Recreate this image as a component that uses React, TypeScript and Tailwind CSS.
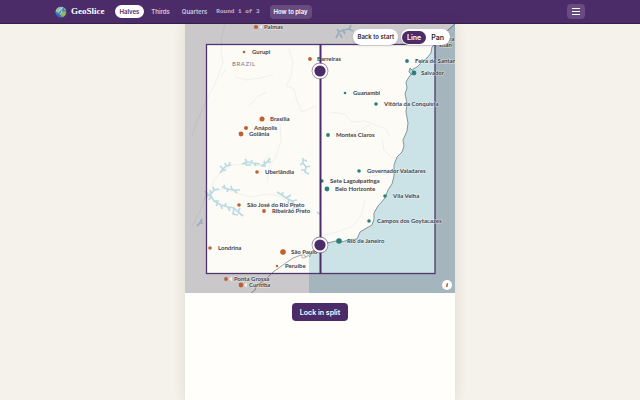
import React, { useState } from 'react';
import clsx from 'clsx';

type City = { name: string; x: number; y: number; r: number; labelX: number; side: 'west' | 'east' };

const cities: City[] = [
  { name: 'Palmas', x: 71, y: 3, r: 2.1, labelX: 79, side: 'west' },
  { name: 'Gurupi', x: 59, y: 28, r: 1.3, labelX: 67, side: 'west' },
  { name: 'Barreiras', x: 125, y: 35, r: 1.9, labelX: 132, side: 'west' },
  { name: 'Brasília', x: 77, y: 95, r: 2.5, labelX: 85, side: 'west' },
  { name: 'Anápolis', x: 61, y: 104, r: 2, labelX: 69, side: 'west' },
  { name: 'Goiânia', x: 56, y: 110, r: 2.4, labelX: 64, side: 'west' },
  { name: 'Uberlândia', x: 72, y: 148, r: 1.8, labelX: 80, side: 'west' },
  { name: 'São José do Rio Preto', x: 54, y: 181, r: 1.8, labelX: 62, side: 'west' },
  { name: 'Ribeirão Preto', x: 79, y: 187, r: 1.9, labelX: 87, side: 'west' },
  { name: 'Londrina', x: 25, y: 224, r: 1.8, labelX: 33, side: 'west' },
  { name: 'São Paulo', x: 98, y: 228, r: 2.8, labelX: 106, side: 'west' },
  { name: 'Peruíbe', x: 92, y: 242, r: 1.2, labelX: 100, side: 'west' },
  { name: 'Ponta Grossa', x: 41, y: 255, r: 1.9, labelX: 49, side: 'west' },
  { name: 'Curitiba', x: 56, y: 261, r: 2.4, labelX: 64, side: 'west' },
  { name: 'Feira de Santana', x: 222, y: 37, r: 1.9, labelX: 230, side: 'east' },
  { name: 'Salvador', x: 229, y: 49, r: 2.4, labelX: 236, side: 'east' },
  { name: 'Guanambi', x: 160, y: 69, r: 1.3, labelX: 168, side: 'east' },
  { name: 'Vitória da Conquista', x: 191, y: 80, r: 1.8, labelX: 199, side: 'east' },
  { name: 'Montes Claros', x: 143, y: 111, r: 1.9, labelX: 151, side: 'east' },
  { name: 'Governador Valadares', x: 174, y: 147, r: 1.8, labelX: 182, side: 'east' },
  { name: 'Sete Lagoas', x: 137, y: 157, r: 1.7, labelX: 145, side: 'east' },
  { name: 'Belo Horizonte', x: 142, y: 165, r: 2.4, labelX: 150, side: 'east' },
  { name: 'Vila Velha', x: 200, y: 172, r: 1.8, labelX: 208, side: 'east' },
  { name: 'Campos dos Goytacazes', x: 184, y: 197, r: 1.8, labelX: 192, side: 'east' },
  { name: 'Rio de Janeiro', x: 154, y: 217, r: 2.8, labelX: 162, side: 'east' },
];

// Labels whose own dot is hidden or off the map
const looseLabels = [
  { name: 'Ipatinga', x: 173, y: 159 },
  { name: 'ra', x: 264, y: 17 },
  { name: 'stián', x: 254, y: 23 },
];

const modes = ['Halves', 'Thirds', 'Quarters'];

const coast =
  'M270 0 L263 6 L258 14 L252 18 L247 23 L246 29 L242 34 L237 38 L232 43 L228 45 L227 49 L224 53 L221 58 L222 64 L220 70 L222 79 L221 88 L223 99 L222 107 L218 116 L219 122 L217 128 L212 133 L209 141 L209 152 L207 160 L203 166 L200 174 L193 182 L189 189 L189 195 L187 201 L180 205 L175 208 L172 215 L164 216 L156 218 L151 217 L142 219 L136 219 L128 228 L124 233';

const southCoast = 'M136 219 L128 228 L121 233 L116 231 L108 234 L98 241 L88 248 L80 256 L72 261 L70 266 L65 270';

const lakes = [
  'M21 169 L26 172 L29 177 L36 181 L43 183 L49 184 L53 188 L58 192 M26 172 L24 176 M29 177 L34 177 M36 181 L37 185 M43 183 L45 187 M49 184 L48 190 L53 191 M53 188 L55 184 M33 179 L31 182 M40 182 L41 179',
  'M21 173 L26 170 L29 166 L34 165 M26 170 L25 166 M29 166 L28 163 M24 172 L20 167',
  'M35 149 L38 145 L41 142 L46 141 M38 145 L35 142 M41 142 L40 139 M36 147 L41 146 M44 141 L45 138',
  'M57 140 L62 138 L68 139 L75 140 M62 138 L60 135 M66 139 L67 136 M69 139 L71 142 M59 139 L62 141 L66 141',
  'M76 142 L80 140 L83 137 L85 134 M80 140 L79 137 M77 142 L81 142 M82 138 L86 138',
  'M37 163 L43 165 L49 166 L55 166 M43 165 L42 168 M47 165 L46 162 M49 166 L52 169 M40 164 L39 161',
  'M118 134 L118 139 L121 143 L120 148 L124 150 M118 139 L115 141 M121 143 L125 142 M120 146 L116 146 M119 136 L122 137',
  'M92 168 L97 171 L101 174 L107 177 L111 183 L116 186 M97 171 L98 168 M101 174 L106 171 M107 177 L112 176 M110 182 L107 186 M104 175 L103 180',
  'M12 202 L15 199 L17 195 M15 199 L18 199',
  'M132 188 L136 191',
  'M151 14 L154 8 L158 6 L164 5 L166 1 M154 8 L152 5 M158 6 L160 10 M164 5 L168 7 M155 10 L157 14',
];

const rivers =
  'M40 0 L37 12 L36 28 L38 38 L34 50 L28 64 L22 75 M22 75 L12 98 L7 112 M40 46 L36 52 M50 53 L61 56 L75 54 L88 51 M64 82 L72 73 L82 68 M104 25 L108 38 L106 52 L101 62 L109 65 L112 77 L117 88 L131 82 M82 158 L84 144 L91 132 L96 116 L95 100 M27 166 L28 157 L36 148 L46 141 L60 140 L76 142 L84 130 M22 169 L38 165 L52 169 L66 173 L82 170 L94 172 L107 181 M22 168 L15 187 L7 202 M145 88 L160 90 L167 98 L180 97 L201 105 L205 113 M197 115 L199 126 L207 134 M160 118 L172 107 L185 101 M171 162 L181 153 L193 151 M136 212 L152 208 L168 202 L177 190 L180 176';

const labelClass =
  "font-['Lato',sans-serif] text-[6px] font-bold fill-[#45424b] stroke-[#fdfbf6]/60 [paint-order:stroke] [stroke-width:1px]";

function Globe() {
  return (
    <svg viewBox="0 0 24 24" className="size-3 shrink-0" aria-hidden="true">
      <circle cx="12" cy="12" r="11" fill="#3f86c0" />
      <path d="M3 6 Q7 1 13 2 L15 6 L10 9 L8 14 L4 12 L1 12 Z" fill="#9fc0a0" />
      <path d="M13 13 L19 10 L22 13 L20 19 L15 22 L12 18 Z" fill="#9bb551" />
      <path d="M18 4 L22 8 L19 8 Z" fill="#b4c85b" />
      <path d="M2 15 Q4 21 11 23 L8 18 Z" fill="#24609c" />
      <path d="M16 2 L8 11 M14 9 L11 17" fill="none" stroke="#d8e8ee" strokeWidth="1.6" />
    </svg>
  );
}

function Handle({ y }: { y: number }) {
  return (
    <g>
      <circle cx="135" cy={y} r="8.4" fill="#5a4470" opacity="0.6" />
      <circle cx="135" cy={y} r="7.6" fill="#ffffff" />
      <circle cx="135" cy={y} r="5.6" fill="#4b2c69" />
    </g>
  );
}

function SplitMap() {
  return (
    <svg viewBox="0 0 270 269" className="block w-full" role="img" aria-label="Map of Brazil">
      <rect width="270" height="269" fill="#fdfbf6" />
      <path d={`${coast} L124 269 L270 269 Z`} fill="#cbe3e7" />
      <path d={rivers} fill="none" stroke="#e9e6e6" strokeWidth="0.6" />
      {lakes.map((d) => (
        <path key={d} d={d} fill="none" stroke="#b9dbe1" strokeWidth="1.7" strokeLinejoin="round" />
      ))}
      <path d={coast} fill="none" stroke="#85959b" strokeWidth="1" />
      <path d={southCoast} fill="none" stroke="#99979b" strokeWidth="0.9" />
      <path d="M227 46 L225 44 L224 48 L227 51" fill="#b9dce2" stroke="#4f8d94" strokeWidth="0.9" />
      <path d="M117 231 h3 v3 h-3 z" fill="#ffffff" stroke="#99979b" strokeWidth="0.6" />

      {/* Area outside the puzzle frame */}
      <path
        d="M0 0 H270 V269 H0 Z M21.5 20.5 V249.5 H250 V20.5 Z"
        fill="#2b2440"
        fillRule="evenodd"
        opacity="0.24"
      />
      <rect x="21.5" y="20.5" width="228.5" height="229" fill="none" stroke="#50366f" strokeWidth="1.3" />
      <path
        d="M74 3 l3 -2 v4 z M44 255 l3 -2.5 v5 z M59 261 l3 -2.5 v5 z"
        fill="#f3f0ec"
      />

      <text x="47" y="42" className="font-['Lato',sans-serif] text-[6px] tracking-widest fill-[#77767f]">
        BRAZIL
      </text>
      {looseLabels.map((label) => (
        <text key={label.name} x={label.x} y={label.y} className={labelClass}>
          {label.name}
        </text>
      ))}
      {cities.map((city) => (
        <g key={city.name}>
          <circle cx={city.x} cy={city.y} r={city.r} fill={city.side === 'west' ? '#c0602f' : '#2c7f7b'} />
          <text x={city.labelX} y={city.y + 2} className={labelClass}>
            {city.name}
          </text>
        </g>
      ))}

      <path d="M135.5 20 V250" stroke="#4b2c69" strokeWidth="2" />
      <Handle y={47} />
      <Handle y={221} />
    </svg>
  );
}

export default function App() {
  const [mode, setMode] = useState('Halves');
  const [tool, setTool] = useState('Line');

  return (
    <div className="flex min-h-screen flex-col bg-[#f5f2eb] font-['Inter',sans-serif]">
      <header className="border-b border-[#352049] bg-[#4b2c69]">
        <div className="mx-auto flex h-[23px] max-w-[530px] items-center">
          <a href="/" className="flex items-center gap-1 text-white">
            <Globe />
            <span className="font-['Liberation_Serif',serif] text-[9px] leading-none font-bold">GeoSlice</span>
          </a>
          <nav className="ml-[10px] flex items-center gap-[2px]">
            {modes.map((m) => (
              <button
                key={m}
                onClick={() => setMode(m)}
                className={clsx(
                  'h-[13px] rounded-full px-[5px] text-[6px] leading-none font-semibold',
                  mode === m ? 'bg-white text-[#4b2c69]' : 'text-[#d3c8dc]',
                )}
              >
                {m}
              </button>
            ))}
          </nav>
          <span className="ml-1 font-['Liberation_Mono',monospace] text-[6px] font-bold text-[#c3b5cf]">
            Round 1 of 3
          </span>
          <button className="ml-[10px] h-[14px] rounded bg-[#674b81] px-1 text-[6px] leading-none font-semibold text-white">
            How to play
          </button>
          <button
            aria-label="Menu"
            className="ml-auto flex h-[15px] w-[18px] items-center justify-center rounded bg-[#674b81] text-white"
          >
            <svg viewBox="0 0 8 7" className="h-[7px] w-2" aria-hidden="true">
              <path d="M0 0.5 H8 M0 3.5 H8 M0 6.5 H8" stroke="currentColor" />
            </svg>
          </button>
        </div>
      </header>

      <main className="mx-auto flex w-full max-w-[270px] flex-1 flex-col items-center bg-[#fffefb] shadow-[0_0_12px_rgba(60,40,30,0.12)]">
        <div className="relative w-full overflow-hidden">
          <SplitMap />
          <div className="absolute top-[5px] right-[5px] flex items-center gap-[3px]">
            <button className="h-4 rounded-full bg-white px-1 text-[6px] leading-none font-semibold text-[#2b2833] shadow">
              Back to start
            </button>
            <div className="flex h-4 items-center rounded-full bg-white px-px shadow">
              {['Line', 'Pan'].map((t) => (
                <button
                  key={t}
                  onClick={() => setTool(t)}
                  className={clsx(
                    'h-[13px] rounded-full px-[5px] text-[7px] leading-none font-semibold',
                    tool === t ? 'bg-[#4b2c69] text-white' : 'text-[#2b2833]',
                  )}
                >
                  {t}
                </button>
              ))}
            </div>
          </div>
          <button
            aria-label="Map attribution"
            className="absolute right-[3px] bottom-[3px] size-[10px] rounded-full bg-white font-['Liberation_Serif',serif] text-[7px] leading-none font-bold text-[#2b2833] italic"
          >
            i
          </button>
        </div>
        <button className="mt-[10px] h-[18px] rounded bg-[#4b2c69] px-2 text-[7px] leading-none font-semibold text-white">
          Lock in split
        </button>
      </main>
    </div>
  );
}
